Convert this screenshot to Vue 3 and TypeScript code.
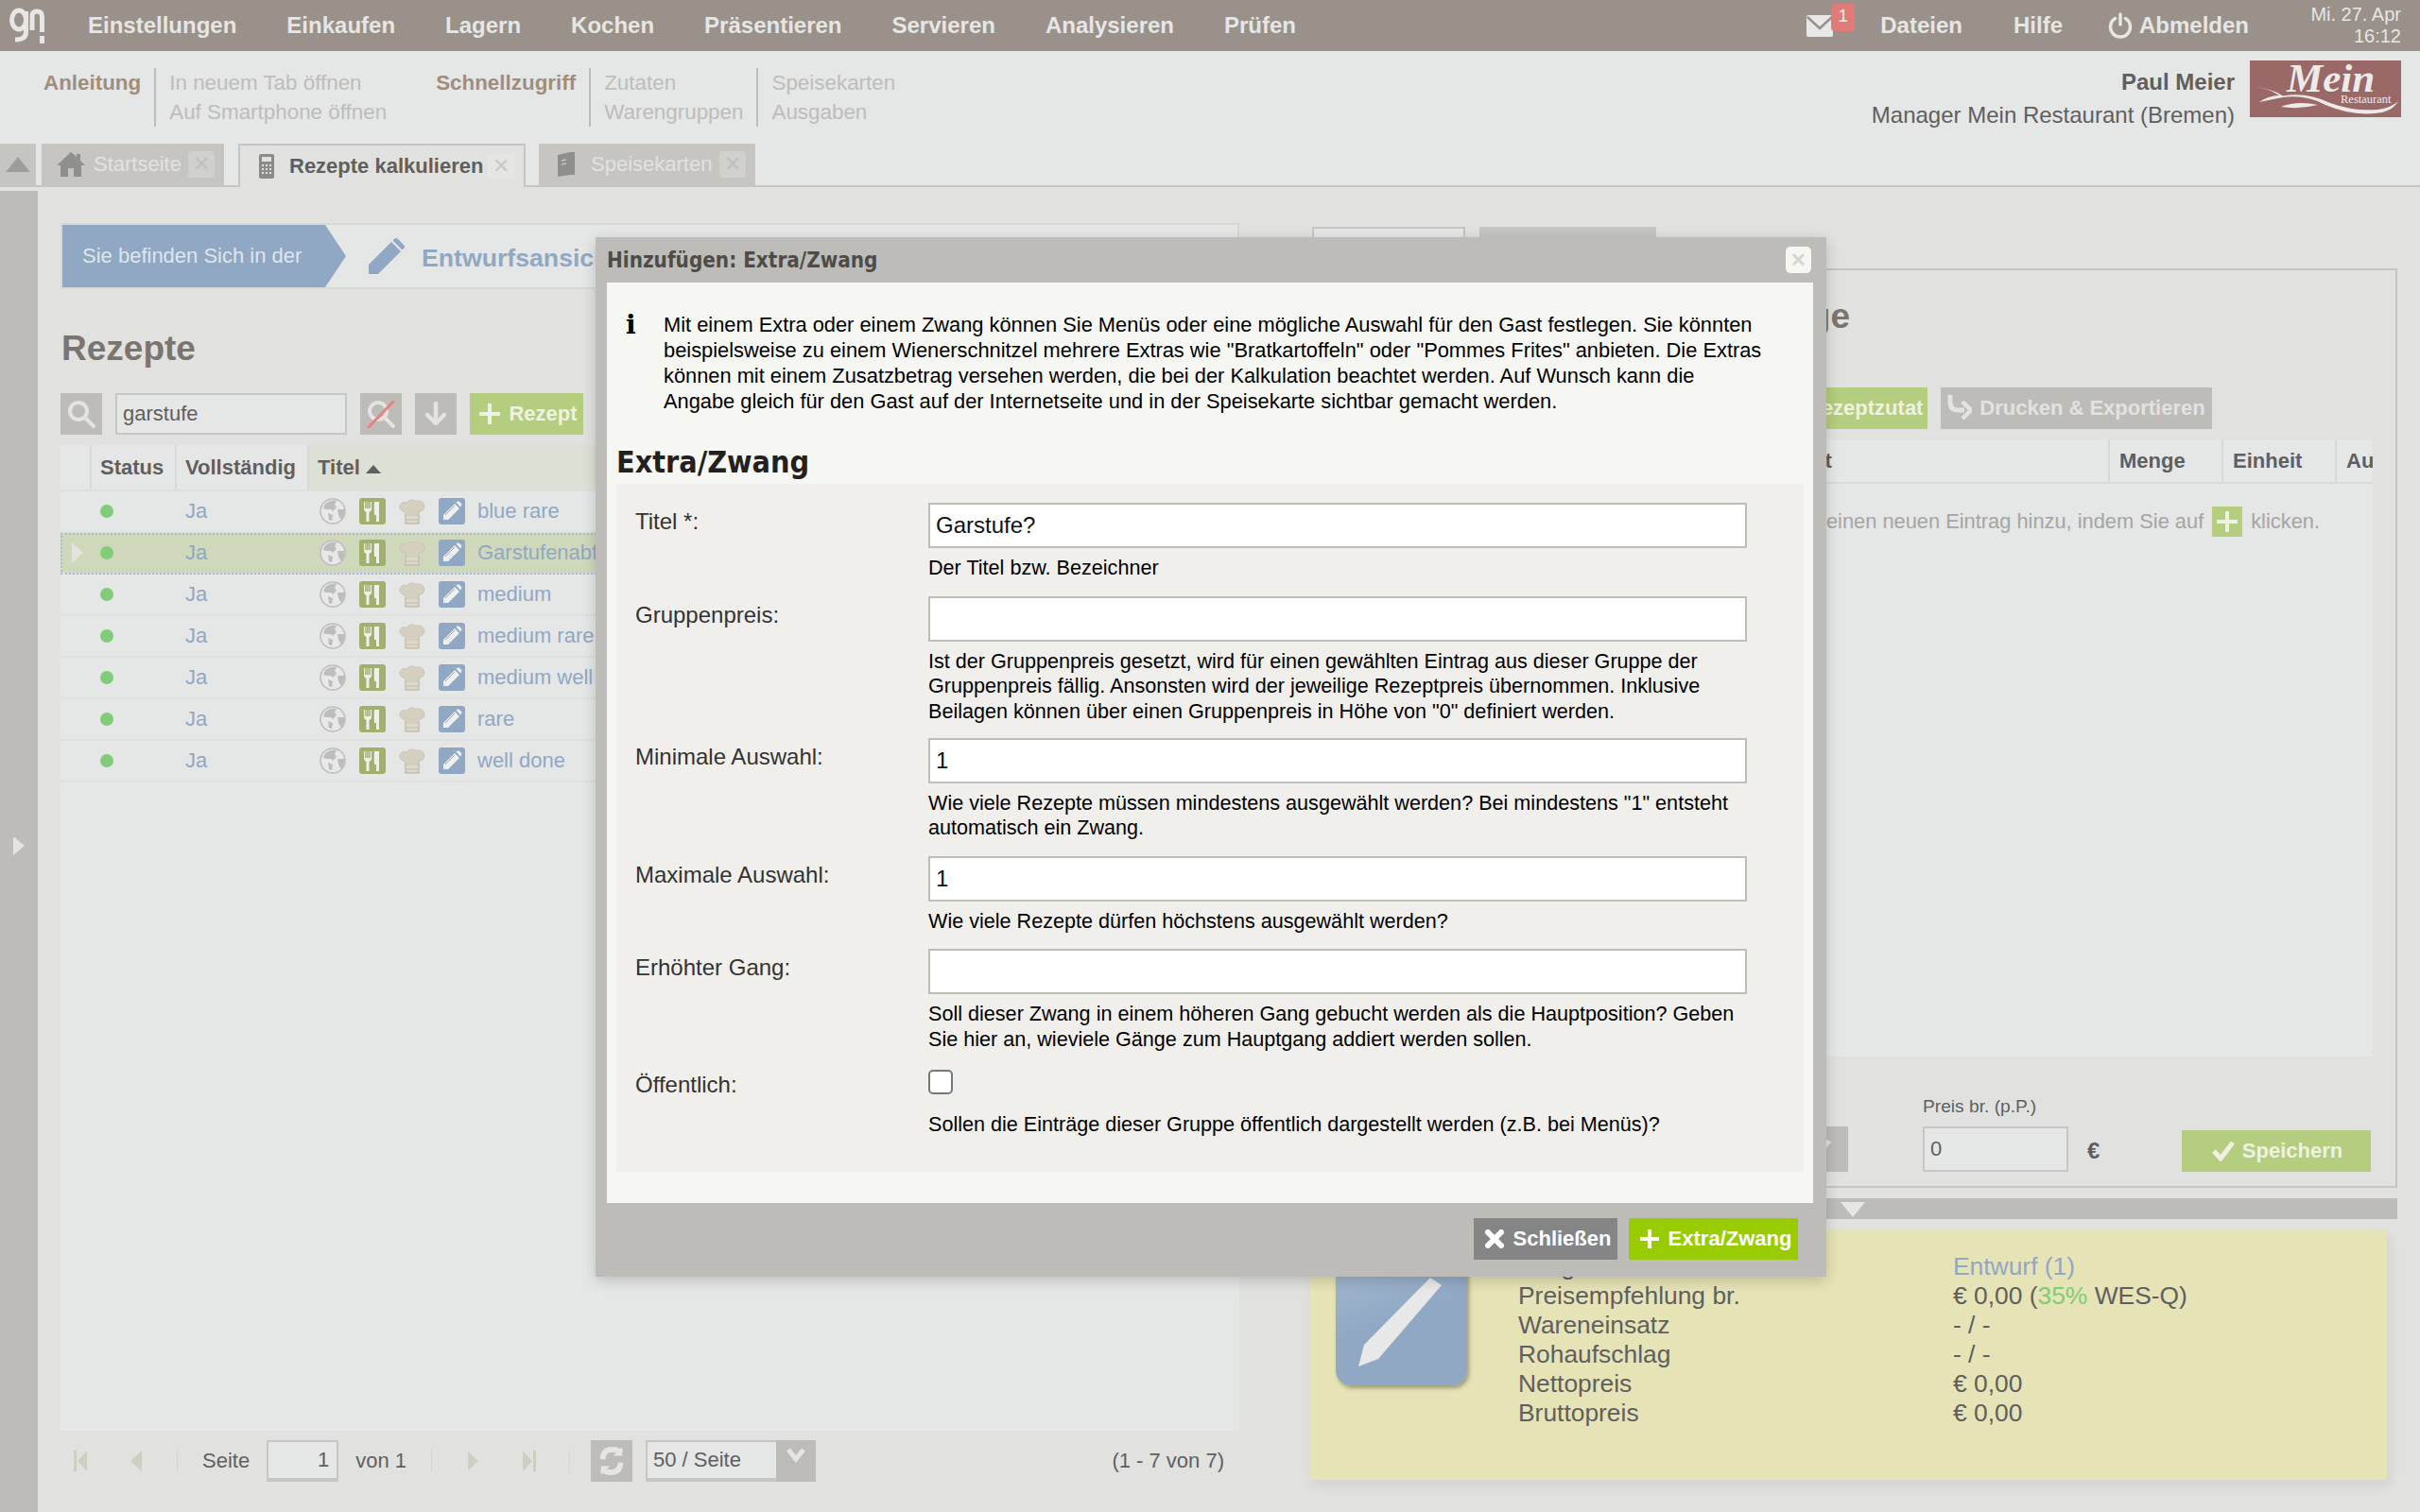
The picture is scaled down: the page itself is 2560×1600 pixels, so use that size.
<script setup lang="ts">
interface FormField {
  label: string;
  value?: string;
  help: string[];
  checkbox?: boolean;
}

const navItems = ['Einstellungen', 'Einkaufen', 'Lagern', 'Kochen', 'Präsentieren', 'Servieren', 'Analysieren', 'Prüfen'];
const recipes = ['blue rare', 'Garstufenabfrage', 'medium', 'medium rare', 'medium well', 'rare', 'well done'];

const infoLines = [
  'Mit einem Extra oder einem Zwang können Sie Menüs oder eine mögliche Auswahl für den Gast festlegen. Sie könnten',
  'beispielsweise zu einem Wienerschnitzel mehrere Extras wie "Bratkartoffeln" oder "Pommes Frites" anbieten. Die Extras',
  'können mit einem Zusatzbetrag versehen werden, die bei der Kalkulation beachtet werden. Auf Wunsch kann die',
  'Angabe gleich für den Gast auf der Internetseite und in der Speisekarte sichtbar gemacht werden.',
];

const fields: FormField[] = [
  { label: 'Titel *:', value: 'Garstufe?', help: ['Der Titel bzw. Bezeichner'] },
  {
    label: 'Gruppenpreis:',
    value: '',
    help: [
      'Ist der Gruppenpreis gesetzt, wird für einen gewählten Eintrag aus dieser Gruppe der',
      'Gruppenpreis fällig. Ansonsten wird der jeweilige Rezeptpreis übernommen. Inklusive',
      'Beilagen können über einen Gruppenpreis in Höhe von "0" definiert werden.',
    ],
  },
  {
    label: 'Minimale Auswahl:',
    value: '1',
    help: ['Wie viele Rezepte müssen mindestens ausgewählt werden? Bei mindestens "1" entsteht', 'automatisch ein Zwang.'],
  },
  { label: 'Maximale Auswahl:', value: '1', help: ['Wie viele Rezepte dürfen höchstens ausgewählt werden?'] },
  {
    label: 'Erhöhter Gang:',
    value: '',
    help: [
      'Soll dieser Zwang in einem höheren Gang gebucht werden als die Hauptposition? Geben',
      'Sie hier an, wieviele Gänge zum Hauptgang addiert werden sollen.',
    ],
  },
  { label: 'Öffentlich:', checkbox: true, help: ['Sollen die Einträge dieser Gruppe öffentlich dargestellt werden (z.B. bei Menüs)?'] },
];

const summary = [
  { label: 'Preisempfehlung br.', value: '€ 0,00 (', pct: '35%', rest: ' WES-Q)' },
  { label: 'Wareneinsatz', value: '- / -' },
  { label: 'Rohaufschlag', value: '- / -' },
  { label: 'Nettopreis', value: '€ 0,00' },
  { label: 'Bruttopreis', value: '€ 0,00' },
];
</script>

<template>
  <div class="page">
    <header class="topbar">
      <svg class="brand" viewBox="0 0 38 38" width="38" height="38" fill="none" stroke="#e6e6e4" stroke-width="5">
        <ellipse cx="10" cy="13" rx="7.5" ry="10" />
        <path d="M17.5 4V26Q17.5 34 6 34" />
        <path d="M24 24V9Q24 4 29 4Q34.500 4 34.500 10V26" />
        <path d="M34.500 30V38" />
      </svg>
      <nav class="nav">
        <span v-for="item in navItems" :key="item">{{ item }}</span>
      </nav>
      <div class="top-right">
        <div class="mail">
          <svg viewBox="0 0 28 24" width="28" height="24">
            <rect y="1" width="28" height="23" rx="2" fill="#e8e8e6" />
            <path d="M1 3L14 15L27 3" fill="none" stroke="#99918a" stroke-width="2.500" />
          </svg>
          <span class="badge">1</span>
        </div>
        <span class="top-link top-files">Dateien</span>
        <span class="top-link top-help">Hilfe</span>
        <svg class="power" viewBox="0 0 26 28" width="26" height="28" fill="none" stroke="#e6e6e4" stroke-width="3.500" stroke-linecap="round">
          <path d="M7.500 6.500A10.500 10.500 0 1 0 18.500 6.500" />
          <path d="M13 2V13" />
        </svg>
        <span class="top-link">Abmelden</span>
        <div class="clock">Mi. 27. Apr<br />16:12</div>
      </div>
    </header>

    <section class="subheader">
      <div class="sub-group first">
        <strong>Anleitung</strong>
        <div class="sub-col"><span>In neuem Tab öffnen</span><span>Auf Smartphone öffnen</span></div>
      </div>
      <div class="sub-group second">
        <strong>Schnellzugriff</strong>
        <div class="sub-col"><span>Zutaten</span><span>Warengruppen</span></div>
        <div class="sub-col"><span>Speisekarten</span><span>Ausgaben</span></div>
      </div>
      <div class="user">
        <div class="user-text">
          <strong>Paul Meier</strong>
          <span>Manager Mein Restaurant (Bremen)</span>
        </div>
        <svg class="logo" viewBox="0 0 160 60" width="160" height="60">
          <rect width="160" height="60" fill="#9a6867" />
          <text x="39" y="33" class="logo-main">Mein</text>
          <text x="96" y="45" class="logo-sub">Restaurant</text>
          <path d="M5 28Q20 29 31 37Q20 37 10 44Q24 41 35 39Q60 36 80 47Q110 60 140 55Q152 52 157 43Q150 50 135 52Q110 54 85 45Q60 33 35 37.500Q22 29 5 28Z" fill="#ecebea" />
          <path d="M33 49Q50 42 72 47Q52 52 33 49Z" fill="#ecebea" />
        </svg>
      </div>
    </section>

    <div class="tabs">
      <div class="tab-scroll"><i class="tri-up"></i></div>
      <div class="tab home">
        <svg viewBox="0 0 30 26" width="30" height="26" fill="#8f8f8d">
          <path d="M15 0L21 5V2H25V9L30 14H26V26H18V17H12V26H4V14H0Z" />
        </svg>
        <span>Startseite</span>
        <b class="tab-x">✕</b>
      </div>
      <div class="tab active">
        <svg viewBox="0 0 16 26" width="16" height="26">
          <rect width="16" height="26" rx="2" fill="#8b8b89" />
          <rect x="3" y="3" width="10" height="5" fill="#e1e2e0" />
          <path d="M3 11h2v2H3zM7 11h2v2H7zM11 11h2v2h-2zM3 15h2v2H3zM7 15h2v2H7zM11 15h2v2h-2zM3 19h2v2H3zM7 19h2v2H7zM11 19h2v2h-2z" fill="#e1e2e0" />
        </svg>
        <span>Rezepte kalkulieren</span>
        <b class="tab-x">✕</b>
      </div>
      <div class="tab cards">
        <svg viewBox="0 0 18 26" width="18" height="26">
          <path d="M0 3L13 0H18V24H13L0 26Z" fill="#8f8f8d" />
          <path d="M4 9L9 8M4 13L9 12" stroke="#c6c5c2" stroke-width="1.500" />
        </svg>
        <span>Speisekarten</span>
        <b class="tab-x">✕</b>
      </div>
    </div>

    <main class="main">
      <aside class="strip"><i class="tri-right"></i></aside>

      <section class="left">
        <div class="crumb">
          <div class="crumb-arrow">Sie befinden Sich in der</div>
          <svg class="crumb-pen" viewBox="0 0 38 38" width="38" height="38" fill="#90a8c4">
            <path d="M0 38V28L24 4L34 14L10 38Z" />
            <path d="M27 1Q29 -1 31 1L37 7Q39 9 37 11L35.500 12.500L25.500 2.500Z" />
          </svg>
          <span class="crumb-text">Entwurfsansicht</span>
        </div>
        <h2 class="title">Rezepte</h2>
        <div class="toolbar">
          <button class="tool">
            <svg viewBox="0 0 30 30" width="30" height="30" fill="none" stroke="#e3e3e1" stroke-width="4" stroke-linecap="round">
              <circle cx="12" cy="12" r="9" />
              <path d="M19 19L28 28" />
            </svg>
          </button>
          <input class="search" value="garstufe" readonly />
          <button class="tool">
            <svg viewBox="0 0 30 30" width="30" height="30" fill="none" stroke="#e3e3e1" stroke-width="4" stroke-linecap="round">
              <circle cx="12" cy="12" r="9" />
              <path d="M19 19L28 28" />
              <path d="M2 29L28 2" stroke="#e8827a" stroke-width="3" />
            </svg>
          </button>
          <button class="tool">
            <svg viewBox="0 0 24 26" width="24" height="26" fill="none" stroke="#e3e3e1" stroke-width="4.500" stroke-linecap="round" stroke-linejoin="round">
              <path d="M12 2V23M3 14L12 23L21 14" />
            </svg>
          </button>
          <button class="add">
            <svg viewBox="0 0 22 22" width="22" height="22" fill="#eef2e2"><path d="M9 0h4v9h9v4h-9v9H9v-9H0V9h9z" /></svg>
            Rezept
          </button>
        </div>

        <div class="table">
          <div class="thead">
            <span></span>
            <span class="th">Status</span>
            <span class="th">Vollständig</span>
            <span class="th sorted">Titel <i class="tri-sort"></i></span>
          </div>
          <div v-for="(name, i) in recipes" :key="name" class="trow" :class="{ selected: i === 1 }">
            <span class="cell-mark"><i v-if="i === 1" class="tri-row"></i></span>
            <span class="cell-status"><i class="dot"></i></span>
            <span class="link">Ja</span>
            <span class="cell-title">
              <svg viewBox="0 0 28 28" width="28" height="28">
                <circle cx="14" cy="14" r="13" fill="#e8e8e8" stroke="#bdbdbb" stroke-width="1.500" />
                <path d="M6 6Q12 1 18 3L16 7L18 10L14 14L12 12L7 12L4 11ZM19 12L26 12Q27 18 23 23L20 18ZM9 16L14 18L13 24L10 23Z" fill="#bdbdbb" />
              </svg>
              <svg viewBox="0 0 28 28" width="28" height="28">
                <rect width="28" height="28" rx="3" fill="#a0b06f" />
                <path d="M5 4V12Q5 14 7.500 15V25H10.500V15Q13 14 13 12V4H11.800V11H10.300V4H9.700V11H8.200V4H7.600V11H6.200V4Z" fill="#f0f0e8" />
                <path d="M16 4H21V25H18V18H16Q15.500 10 16 4Z" fill="#f0f0e8" />
              </svg>
              <svg viewBox="0 0 28 28" width="28" height="28">
                <path d="M7 17H21V27H7Z" fill="#dcd8cb" stroke="#c4beac" stroke-width="1.500" />
                <path d="M7 15Q0 13 1 8Q3 3 8 5Q13 0 18 3Q26 2 27 9Q27 13 21 15V18H7Z" fill="#d5cfbf" stroke="#cdc7b6" stroke-width="1" />
                <path d="M7 23H21" stroke="#c4beac" stroke-width="1" />
              </svg>
              <svg viewBox="0 0 28 28" width="28" height="28">
                <rect width="28" height="28" rx="3" fill="#90a8c4" />
                <path d="M5 23V18L17 6L22 11L10 23ZM18.500 4.500L20 3.500Q21 3 22 4L24 6Q25 7 24 8L23 9.500Z" fill="#eef0f2" />
                <path d="M7 18L17 8" stroke="#90a8c4" stroke-width="1" />
              </svg>
              <span class="link title-link">{{ name }}</span>
            </span>
          </div>
        </div>

        <div class="pager">
          <svg class="pg-first" viewBox="0 0 14 22" width="14" height="22" fill="#cdcfc1"><path d="M0 0h3v22H0zM14 0V22L4 11Z" /></svg>
          <svg class="pg-prev" viewBox="0 0 12 22" width="12" height="22" fill="#cdcfc1"><path d="M12 0V22L0 11Z" /></svg>
          <i class="pg-sep sep-a"></i>
          <span class="pg-seite">Seite</span>
          <input class="pg-input" value="1" readonly />
          <span class="pg-von">von 1</span>
          <i class="pg-sep sep-b"></i>
          <svg class="pg-next" viewBox="0 0 12 22" width="11" height="22" fill="#cdcfc1"><path d="M0 0V22L12 11Z" /></svg>
          <svg class="pg-last" viewBox="0 0 14 22" width="14" height="22" fill="#cdcfc1"><path d="M11 0h3v22h-3zM0 0V22L10 11Z" /></svg>
          <i class="pg-sep sep-c"></i>
          <button class="pg-refresh">
            <svg viewBox="0 0 30 36" width="28" height="34" fill="none" stroke="#e5e5e3" stroke-width="6">
              <path d="M5 16Q5 5 16 5Q22 5 26 9" />
              <path d="M25 20Q25 31 14 31Q8 31 4 27" />
              <path d="M27 2V12H17M3 34V24H13" fill="#e5e5e3" stroke="none" />
            </svg>
          </button>
          <div class="pg-select">
            <span>50 / Seite</span>
            <b>
              <svg viewBox="0 0 20 16" width="20" height="16" fill="none" stroke="#e5e5e3" stroke-width="5"><path d="M2 2L10 12L18 2" /></svg>
            </b>
          </div>
          <span class="pg-count">(1 - 7 von 7)</span>
        </div>
      </section>

      <section class="right">
        <div class="right-tabs"><i class="rtab-a"></i><i class="rtab-b"></i></div>
        <div class="panel">
          <h2 class="title panel-title">Lage</h2>
          <div class="panel-actions">
            <button class="add zutat">
              <svg viewBox="0 0 22 22" width="22" height="22" fill="#eef2e2"><path d="M9 0h4v9h9v4h-9v9H9v-9H0V9h9z" /></svg>
              Rezeptzutat
            </button>
            <button class="print">
              <svg viewBox="0 0 26 28" width="26" height="28" fill="none" stroke="#e3e3e1" stroke-width="5"><path d="M3 0V8Q3 16 12 16H18" /><path d="M16 7L25 16L16 25" stroke-width="4.500" /></svg>
              Drucken &amp; Exportieren
            </button>
          </div>
          <div class="ptable">
            <div class="phead">
              <span class="pcol-name">Zutat</span>
              <span class="pcol">Menge</span>
              <span class="pcol">Einheit</span>
              <span class="pcol clip">Au</span>
            </div>
            <div class="pbody">
              <span>Fügen Sie einen neuen Eintrag hinzu, indem Sie auf</span>
              <i class="plus-box">
                <svg viewBox="0 0 22 22" width="22" height="22" fill="#eef2e2"><path d="M9 0h4v9h9v4h-9v9H9v-9H0V9h9z" /></svg>
              </i>
              <span>klicken.</span>
            </div>
          </div>
          <div class="panel-foot">
            <button class="foot-check">
              <svg viewBox="0 0 24 22" width="24" height="22" fill="none" stroke="#e3e3e1" stroke-width="5"><path d="M2 11L9 19L22 2" /></svg>
            </button>
            <label class="price">
              <span>Preis br. (p.P.)</span>
              <input value="0" readonly />
            </label>
            <b class="euro">€</b>
            <button class="save">
              <svg viewBox="0 0 24 22" width="24" height="22" fill="none" stroke="#eef2e2" stroke-width="5"><path d="M2 11L9 19L22 2" /></svg>
              Speichern
            </button>
          </div>
        </div>
        <div class="collapse"><i class="tri-down"></i></div>
        <div class="summary">
          <div class="big-icon">
            <svg viewBox="0 0 139 139" width="139" height="139">
              <path d="M24 119L30 96L100 25L112 33L45 111Z" fill="#e8e8e8" />
            </svg>
          </div>
          <div class="sum-grid">
            <span>Freigabe</span><span class="link">Entwurf (1)</span>
            <template v-for="row in summary" :key="row.label">
              <span>{{ row.label }}</span>
              <span>{{ row.value }}<em v-if="row.pct">{{ row.pct }}</em>{{ row.rest }}</span>
            </template>
          </div>
        </div>
      </section>
    </main>

    <div class="dialog">
      <div class="dlg-head">
        <span>Hinzufügen: Extra/Zwang</span>
        <b class="dlg-close">✕</b>
      </div>
      <div class="dlg-body">
        <div class="info">
          <i class="info-icon">i</i>
          <p><template v-for="line in infoLines" :key="line">{{ line }}<br /></template></p>
        </div>
        <h3 class="dlg-title">Extra/Zwang</h3>
        <div class="form">
          <div v-for="f in fields" :key="f.label" class="form-row" :class="{ 'is-check': f.checkbox }">
            <label>{{ f.label }}</label>
            <div>
              <input v-if="f.checkbox" type="checkbox" class="check" />
              <input v-else class="field" :value="f.value" readonly />
              <p class="help"><template v-for="line in f.help" :key="line">{{ line }}<br /></template></p>
            </div>
          </div>
        </div>
      </div>
      <div class="dlg-foot">
        <button class="btn-close">
          <svg viewBox="0 0 20 20" width="20" height="20" fill="none" stroke="#fff" stroke-width="6" stroke-linecap="round"><path d="M3 3L17 17M17 3L3 17" /></svg>
          Schließen
        </button>
        <button class="btn-add">
          <svg viewBox="0 0 20 20" width="20" height="20" fill="#fff"><path d="M8 0h4v8h8v4h-8v8H8v-8H0V8h8z" /></svg>
          Extra/Zwang
        </button>
      </div>
    </div>
  </div>
</template>

<style>
html,
body {
  margin: 0;
  background: #e1e2e0;
}
</style>

<style scoped>
.page {
  position: relative;
  width: 2560px;
  height: 1600px;
  overflow: hidden;
  display: flex;
  flex-direction: column;
  background: #e1e2e0;
  font-family: "Liberation Sans", Arial, sans-serif;
  font-size: 22px;
  color: #5f5f5f;
}
button {
  border: 0;
  padding: 0;
  font: inherit;
  display: inline-flex;
  align-items: center;
  justify-content: center;
}
input {
  box-sizing: border-box;
  font: inherit;
  outline: none;
}
i {
  display: block;
  font-style: normal;
}

/* top bar */
.topbar {
  height: 54px;
  flex-shrink: 0;
  display: flex;
  align-items: center;
  background: #99918a;
  color: #e6e6e4;
  font-size: 24px;
  font-weight: 700;
}
.brand {
  margin-left: 10px;
}
.nav {
  display: flex;
  gap: 53px;
  margin-left: 45px;
}
.top-right {
  margin-left: auto;
  display: flex;
  align-items: center;
  padding-right: 20px;
}
.mail {
  position: relative;
  display: flex;
  margin-right: 50px;
}
.badge {
  position: absolute;
  left: 26px;
  top: -11px;
  width: 25px;
  height: 29px;
  border-radius: 4px;
  background: #e07b78;
  color: #f3f3f3;
  font-size: 18px;
  font-weight: 400;
  text-align: center;
  line-height: 27px;
}
.top-files {
  margin-right: 54px;
}
.top-help {
  margin-right: 48px;
}
.power {
  margin-right: 7px;
}
.clock {
  margin-left: 65px;
  width: 96px;
  text-align: right;
  font-size: 20px;
  font-weight: 400;
  line-height: 23px;
  white-space: nowrap;
}

/* sub header */
.subheader {
  height: 98px;
  flex-shrink: 0;
  box-sizing: border-box;
  padding: 18px 20px 0 46px;
  display: flex;
  background: #e5e6e6;
  font-size: 22.4px;
  line-height: 31px;
  color: #bdbdbb;
}
.sub-group {
  display: flex;
}
.sub-group strong {
  color: #a08d7c;
  padding-right: 14px;
}
.second {
  margin-left: 38px;
}
.sub-col {
  display: flex;
  flex-direction: column;
  height: 62px;
  padding: 0 14px;
  border-left: 2px solid #bdbdb9;
}
.sub-col span {
  white-space: nowrap;
}
.user {
  margin-left: auto;
  display: flex;
  color: #5f5f5f;
  font-size: 24px;
  line-height: 35px;
}
.user-text {
  margin-top: -3px;
  display: flex;
  flex-direction: column;
  align-items: flex-end;
}
.logo {
  margin: -8px 0 0 16px;
}
.logo-main {
  font-family: "Liberation Serif", serif;
  font-style: italic;
  font-weight: 700;
  font-size: 43px;
  fill: #ecebea;
}
.logo-sub {
  font-family: "Liberation Serif", serif;
  font-size: 12.5px;
  fill: #ecebea;
}

/* tabs */
.tabs {
  position: relative;
  height: 46px;
  box-sizing: border-box;
  flex-shrink: 0;
  display: flex;
  border-bottom: 2px solid #c5c6c3;
  background: #e5e6e6;
}
.tab-scroll {
  width: 38px;
  background: #c5c5c2;
  display: flex;
  align-items: center;
  justify-content: center;
}
.tri-up {
  border: solid transparent;
  border-width: 0 13px 16px;
  border-bottom-color: #9d9d9b;
}
.tab {
  box-sizing: border-box;
  display: flex;
  align-items: center;
  background: #c6c5c2;
  color: #e2e2e0;
}
.home {
  width: 193px;
  margin-left: 6px;
  padding-left: 16px;
}
.home span {
  margin-left: 9px;
}
.active {
  width: 304px;
  height: 46px;
  margin-left: 15px;
  padding-left: 20px;
  background: #e1e2e0;
  border: 2px solid #c5c6c3;
  border-bottom: 0;
  color: #5f5f5f;
  font-weight: 700;
}
.active span {
  margin-left: 16px;
}
.cards {
  width: 229px;
  margin-left: 14px;
  padding-left: 20px;
}
.cards span {
  margin-left: 17px;
}
.tab-x {
  margin-left: auto;
  margin-right: 10px;
  width: 28px;
  height: 28px;
  border-radius: 4px;
  background: #d0d0cd;
  color: #c0c0bd;
  font-weight: 400;
  font-size: 22px;
  line-height: 28px;
  text-align: center;
}
.active .tab-x {
  background: #e5e6e4;
  color: #c9c9c7;
}

/* main area */
.main {
  flex: 1;
  display: flex;
  min-height: 0;
}
.strip {
  width: 40px;
  margin-top: 4px;
  background: #bdbcb9;
  display: flex;
  justify-content: center;
  padding-top: 683px;
  box-sizing: border-box;
}
.tri-right {
  width: 0;
  height: 0;
  border: solid transparent;
  border-width: 10px 0 10px 12px;
  border-left-color: #e3e3e1;
}
.left {
  width: 1247px;
  margin-left: 24px;
  padding-top: 38px;
  display: flex;
  flex-direction: column;
}
.crumb {
  height: 70px;
  box-sizing: border-box;
  border: 2px solid #d8d8d4;
  background: #e5e6e6;
  display: flex;
  align-items: center;
}
.crumb-arrow {
  width: 300px;
  height: 66px;
  box-sizing: border-box;
  padding-left: 21px;
  display: flex;
  align-items: center;
  white-space: nowrap;
  background: #90a8c4;
  color: #dfe5ec;
  clip-path: polygon(0 0, 278px 0, 100% 50%, 278px 100%, 0 100%);
}
.crumb-pen {
  margin-left: 24px;
}
.crumb-text {
  margin: 4px 0 0 18px;
  color: #90a8c4;
  font-size: 26.67px;
  font-weight: 700;
}
.title {
  margin: 41px 0 25px;
  padding-left: 1px;
  font-size: 37px;
  line-height: 44px;
  font-weight: 700;
  color: #7a7570;
}
.toolbar {
  display: flex;
  gap: 14px;
  margin-bottom: 11px;
}
.tool {
  width: 44px;
  height: 44px;
  background: #bdbcb9;
}
.search {
  width: 245px;
  height: 44px;
  padding: 0 6px;
  border: 2px solid #c6c6c4;
  background: #e5e6e6;
  color: #5f5f5f;
  font-size: 22px;
}
.add {
  width: 120px;
  height: 44px;
  box-sizing: border-box;
  padding-left: 4px;
  gap: 9px;
  background: #b5cd7e;
  color: #eef2e2;
  font-weight: 700;
}
.table {
  height: 1043px;
  background: #e5e6e6;
}
.thead {
  display: grid;
  grid-template-columns: 31px 90px 140px 1fr;
  height: 49px;
  border-bottom: 2px solid #dfe0de;
  box-sizing: border-box;
  font-weight: 700;
}
.th {
  padding: 10px 0 0 9px;
  border-left: 2px solid #d8d8d6;
  line-height: 28px;
  box-sizing: border-box;
  display: flex;
  align-items: flex-start;
  gap: 6px;
}
.sorted {
  background: #dde1d5;
}
.tri-sort {
  width: 0;
  height: 0;
  margin-top: 11px;
  border: solid transparent;
  border-width: 0 8px 9px;
  border-bottom-color: #5f5f5f;
}
.trow {
  display: grid;
  grid-template-columns: 31px 90px 140px 1fr;
  align-items: center;
  height: 44px;
  box-sizing: border-box;
  border-bottom: 2px solid #e0e1df;
}
.selected {
  background: #cfd8bb;
  outline: 2px dotted #a9b9d6;
  outline-offset: -2px;
}
.cell-mark {
  display: flex;
  padding-left: 12px;
}
.tri-row {
  width: 0;
  height: 0;
  border: solid transparent;
  border-width: 11px 0 11px 12px;
  border-left-color: #e3e5dc;
}
.cell-status {
  padding-left: 11px;
}
.dot {
  width: 14px;
  height: 14px;
  border-radius: 50%;
  background: #80cc78;
}
.link {
  color: #90a8c4;
  padding-left: 11px;
}
.cell-title {
  display: flex;
  align-items: center;
  gap: 14px;
  padding-left: 13px;
}
.title-link {
  padding-left: 0;
  margin-left: -1px;
  white-space: nowrap;
}

/* pager */
.pager {
  height: 44px;
  margin-top: 10px;
  display: flex;
  align-items: center;
  padding-right: 16px;
  white-space: nowrap;
}
.pg-first {
  margin-left: 14px;
}
.pg-prev {
  margin-left: 46px;
}
.pg-sep {
  width: 1px;
  height: 24px;
  background: #d6d7cc;
}
.sep-a {
  margin-left: 37px;
}
.pg-seite {
  margin-left: 26px;
}
.pg-input {
  width: 76px;
  height: 44px;
  margin-left: 18px;
  padding: 0 8px;
  border: 2px solid #c6c6c4;
  border-bottom-width: 4px;
  background: #e5e6e6;
  color: #5f5f5f;
  text-align: right;
}
.pg-von {
  margin-left: 18px;
}
.sep-b {
  margin-left: 26px;
}
.pg-next {
  margin-left: 38px;
}
.pg-last {
  margin-left: 47px;
}
.sep-c {
  margin-left: 35px;
}
.pg-refresh {
  width: 44px;
  height: 44px;
  margin-left: 22px;
  background: #bdbcb9;
}
.pg-select {
  width: 180px;
  height: 44px;
  margin-left: 14px;
  box-sizing: border-box;
  display: flex;
  align-items: center;
  border: 2px solid #c6c6c4;
  border-bottom-width: 4px;
  background: #e5e6e6;
}
.pg-select span {
  flex: 1;
  padding-left: 6px;
}
.pg-select b {
  align-self: stretch;
  width: 42px;
  margin: -2px -2px -4px 0;
  background: #bdbcb9;
  display: flex;
  justify-content: center;
  padding-top: 8px;
  box-sizing: border-box;
}
.pg-count {
  margin-left: auto;
}

/* right side */
.right {
  width: 1148px;
  margin-left: 77px;
  padding-top: 42px;
  display: flex;
  flex-direction: column;
}
.right-tabs {
  height: 44px;
  display: flex;
  gap: 15px;
}
.rtab-a {
  width: 162px;
  box-sizing: border-box;
  background: #e5e6e6;
  border: 2px solid #c5c6c3;
  border-bottom: 0;
}
.rtab-b {
  width: 187px;
  background: #c5c6c3;
}
.panel {
  height: 973px;
  box-sizing: border-box;
  border: 2px solid #c5c6c3;
  display: flex;
  flex-direction: column;
}
.panel-title {
  margin: 27px 0 0;
  width: 566px;
  text-align: right;
}
.panel-actions {
  display: flex;
  gap: 14px;
  margin-top: 53px;
  padding-left: 481px;
}
.zutat {
  width: 168px;
  justify-content: flex-start;
  padding-left: 6px;
  box-sizing: border-box;
  gap: 12px;
}
.print {
  width: 287px;
  height: 44px;
  gap: 8px;
  background: #bdbcb9;
  color: #e2e2e0;
  font-weight: 700;
}
.ptable {
  margin: 11px 24px 0 26px;
  height: 653px;
  background: #e5e6e6;
}
.phead {
  display: flex;
  height: 47px;
  box-sizing: border-box;
  border-bottom: 2px solid #d8d8d6;
  font-weight: 700;
  line-height: 45px;
}
.pcol-name {
  width: 814px;
  padding-left: 468px;
  box-sizing: border-box;
}
.pcol {
  width: 120px;
  padding-left: 10px;
  box-sizing: border-box;
  border-left: 2px solid #d8d8d6;
}
.clip {
  width: 40px;
  overflow: hidden;
}
.pbody {
  display: flex;
  align-items: center;
  justify-content: flex-end;
  gap: 8px;
  padding: 24px 56px 0 0;
  color: #a5a5a3;
  font-size: 21.83px;
  white-space: nowrap;
}
.plus-box {
  width: 32px;
  height: 32px;
  background: #b5cd7e;
  display: flex;
  align-items: center;
  justify-content: center;
  margin: 0 1px;
}
.panel-foot {
  margin-top: auto;
  padding: 0 26px 15px 505px;
  display: flex;
  align-items: flex-end;
}
.foot-check {
  width: 60px;
  height: 48px;
  background: #bdbcb9;
}
.price {
  margin-left: 79px;
  width: 154px;
  display: flex;
  flex-direction: column;
  font-size: 19.2px;
  line-height: 24px;
  gap: 9px;
  white-space: nowrap;
}
.price input {
  width: 154px;
  height: 48px;
  padding: 0 6px;
  border: 2px solid #c6c6c4;
  background: #e5e6e6;
  color: #5f5f5f;
  font-size: 22px;
}
.euro {
  margin: 0 0 8px 20px;
  font-size: 24px;
}
.save {
  margin-left: auto;
  width: 200px;
  height: 44px;
  box-sizing: border-box;
  padding-left: 2px;
  gap: 8px;
  background: #b5cd7e;
  color: #eef2e2;
  font-weight: 700;
}
.collapse {
  height: 22px;
  margin-top: 11px;
  background: #bdbcb9;
  padding: 4px 0 0 559px;
  box-sizing: border-box;
}
.tri-down {
  width: 0;
  height: 0;
  border: solid transparent;
  border-width: 16px 13px 0;
  border-top-color: #e5e6e6;
}
.summary {
  height: 264px;
  margin: 12px 11px 0 -3px;
  box-sizing: border-box;
  padding: 0 0 0 28px;
  display: flex;
  background: #e6e3b6;
  box-shadow: 3px 6px 12px rgba(0, 0, 0, 0.07);
  font-size: 26.4px;
  line-height: 31px;
}
.big-icon {
  width: 139px;
  height: 139px;
  margin-top: 25px;
  border-radius: 16px;
  background: linear-gradient(160deg, #a6bad1, #90a8c4 50%);
  box-shadow: 2px 3px 4px rgba(90, 85, 60, 0.5);
}
.sum-grid {
  margin: 23px 0 0 54px;
  display: grid;
  grid-template-columns: 460px 1fr;
  align-content: start;
  white-space: nowrap;
}
.sum-grid .link {
  padding: 0;
}
.sum-grid em {
  font-style: normal;
  color: #80cc78;
}

/* dialog */
.dialog {
  position: absolute;
  left: 630px;
  top: 251px;
  width: 1302px;
  height: 1100px;
  display: flex;
  flex-direction: column;
  background: #bdbcb8;
  box-shadow: 0 4px 14px rgba(0, 0, 0, 0.18);
}
.dlg-head {
  height: 48px;
  flex-shrink: 0;
  box-sizing: border-box;
  padding: 0 16px 0 12px;
  display: flex;
  align-items: center;
  justify-content: space-between;
  font-family: "DejaVu Sans Condensed", "DejaVu Sans", Verdana, sans-serif;
  font-stretch: condensed;
  font-weight: 700;
  font-size: 22.3px;
  color: #4e4c49;
}
.dlg-close {
  width: 27px;
  height: 28px;
  border-radius: 5px;
  background: #f6f7f2;
  color: #d4d4cc;
  font-family: "Liberation Sans", sans-serif;
  font-size: 20px;
  line-height: 28px;
  text-align: center;
}
.dlg-body {
  margin: 0 14px 0 12px;
  height: 974px;
  flex-shrink: 0;
  box-sizing: border-box;
  background: #f6f7f2;
  padding-top: 31px;
  color: #000;
}
.info {
  display: flex;
  font-size: 21.83px;
  line-height: 27px;
  white-space: nowrap;
}
.info-icon {
  width: 60px;
  padding-left: 20px;
  box-sizing: border-box;
  font-family: "DejaVu Serif", serif;
  font-weight: 700;
  font-size: 28px;
}
.info p {
  margin: 0;
}
.dlg-title {
  margin: 33px 0 5px 10px;
  font-family: "DejaVu Sans Condensed", "DejaVu Sans", Verdana, sans-serif;
  font-stretch: condensed;
  font-size: 32px;
  line-height: 36px;
  font-weight: 700;
  color: #23201d;
}
.form {
  margin: 0 10px;
  height: 728px;
  box-sizing: border-box;
  padding: 20px 0 0 20px;
  background: #f0efeb;
}
.form-row {
  display: grid;
  grid-template-columns: 310px 866px;
  margin-bottom: 16px;
}
.form-row:nth-child(2) {
  margin-bottom: 14.5px;
}
.form-row:nth-child(5) {
  margin-bottom: 19px;
}
.form-row label {
  padding-top: 7px;
  font-size: 24px;
  line-height: 26.5px;
  color: #333;
}
.is-check label {
  padding-top: 3px;
}
.field {
  display: block;
  width: 866px;
  height: 48px;
  padding: 0 6px;
  border: 2px solid #bdbdb9;
  background: #fff;
  color: #111;
  font-size: 24px;
}
.check {
  appearance: none;
  display: block;
  margin: 0;
  width: 26px;
  height: 26px;
  box-sizing: border-box;
  border: 2px solid #777;
  border-radius: 5px;
  background: #fff;
}
.help {
  margin: 8px 0 0;
  font-size: 21.6px;
  line-height: 26.5px;
  white-space: nowrap;
  color: #000;
}
.is-check .help {
  margin-top: 19px;
}
.dlg-foot {
  flex: 1;
  display: flex;
  justify-content: flex-end;
  align-items: flex-start;
  gap: 12px;
  padding: 16px 30px 0 0;
}
.btn-close,
.btn-add {
  height: 44px;
  box-sizing: border-box;
  padding-left: 5px;
  gap: 10px;
  color: #fff;
  font-weight: 700;
}
.btn-close {
  width: 152px;
  background: #858585;
}
.btn-add {
  width: 179px;
  background: #99cc00;
}
</style>
